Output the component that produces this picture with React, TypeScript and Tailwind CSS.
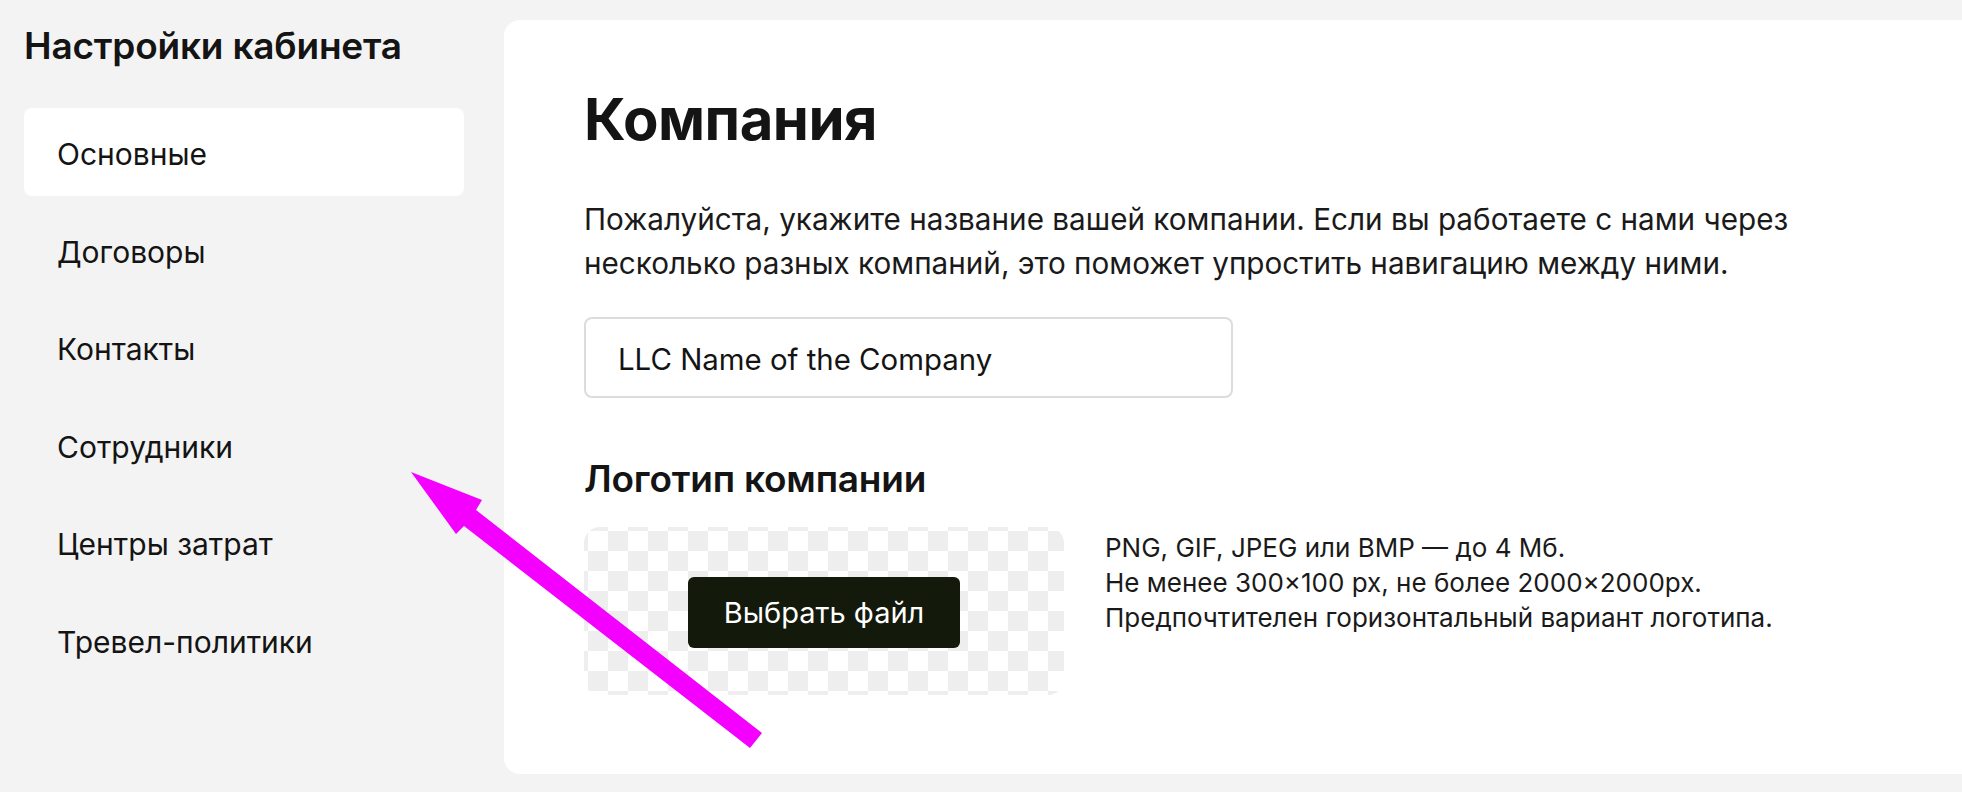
import React from 'react'

const menu = ['Основные', 'Договоры', 'Контакты', 'Сотрудники', 'Центры затрат', 'Тревел-политики']

function Sidebar() {
  return (
    <aside className="w-[464px] shrink-0 pl-[24px] pt-[24px]">
      <h2 className="text-[37px] leading-[44px] font-semibold tracking-[-0.2px] text-[#141414]">
        Настройки кабинета
      </h2>
      <nav className="mt-[40px] flex flex-col gap-[9.5px]">
        {menu.map((item, i) => (
          <a
            key={item}
            href="#"
            className={
              'flex h-[88px] items-center rounded-[8px] pl-[33px] pt-[4px] text-[30px] leading-[36px] text-[#141414] ' +
              (i === 0 ? 'bg-white' : '')
            }
          >
            {item}
          </a>
        ))}
      </nav>
    </aside>
  )
}

function CompanyCard() {
  return (
    <section className="ml-[40px] mt-[20px] mb-[18px] flex-1 rounded-l-[16px] bg-white pl-[80px] pt-[64px]">
      <h1 className="text-[58px] leading-[70px] font-bold tracking-[-0.5px] text-[#141414]">Компания</h1>

      <p className="mt-[43px] text-[29.7px] leading-[44px] text-[#1a1a1a]">
        Пожалуйста, укажите название вашей компании. Если вы работаете с нами через
        <br />
        несколько разных компаний, это поможет упростить навигацию между ними.
      </p>

      <input
        readOnly
        defaultValue="LLC Name of the Company"
        className="mt-[32px] block h-[81px] w-[649px] rounded-[8px] border-2 border-[#dcdcdc] bg-white pl-[32px] pt-[4px] text-[29.4px] text-[#141414] outline-none"
      />

      <h3 className="mt-[59px] text-[37px] leading-[44px] font-semibold tracking-[-0.2px] text-[#141414]">
        Логотип компании
      </h3>

      <div className="mt-[26px] flex items-start gap-[41px]">
        <div className="flex h-[168px] w-[480px] items-center justify-center rounded-[16px] bg-[image:conic-gradient(#eeeeee_25%,#ffffff_0_50%,#eeeeee_0_75%,#ffffff_0)] bg-[length:40px_40px] bg-[position:4px_4px]">
          <button className="mt-[3px] h-[71px] w-[272px] rounded-[6px] bg-[#141a0b] text-[29px] text-white">
            Выбрать файл
          </button>
        </div>
        <div className="mt-[3px] text-[26px] leading-[35px] text-[#1a1a1a]">
          <div>PNG, GIF, JPEG или BMP — до 4 Мб.</div>
          <div>Не менее 300×100 px, не более 2000×2000px.</div>
          <div>Предпочтителен горизонтальный вариант логотипа.</div>
        </div>
      </div>
    </section>
  )
}

function Annotation() {
  // magenta arrow drawn over the screenshot
  return (
    <svg className="pointer-events-none absolute inset-0" width="1962" height="792" viewBox="0 0 1962 792">
      <polygon
        points="411,472 482,500 476,510 762,733 750,748 464,526 456,534"
        fill="#f400ff"
      />
    </svg>
  )
}

export default function App() {
  return (
    <div
      className="relative flex h-[792px] w-full overflow-hidden bg-[#f3f3f3]"
      style={{ fontFamily: 'Inter, "Noto Sans", sans-serif' }}
    >
      <Sidebar />
      <CompanyCard />
      <Annotation />
    </div>
  )
}
